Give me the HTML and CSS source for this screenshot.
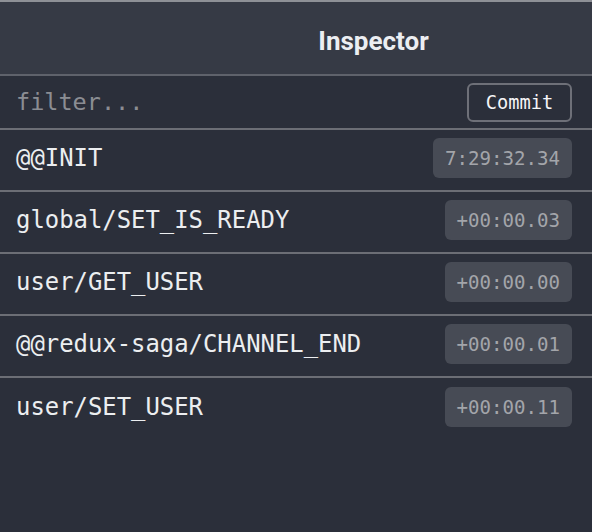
FILE: index.html
```html
<!DOCTYPE html>
<html>
<head>
<meta charset="utf-8">
<link rel="stylesheet" href="styles.css">
</head>
<body>
<div class="panel">
  <header class="header"><h1 class="title">Inspector</h1></header>
  <div class="filter-row">
    <input class="filter" type="text" placeholder="filter...">
    <button class="commit">Commit</button>
  </div>
  <ul class="actions">
    <li class="action"><span class="name">@@INIT</span><span class="time">7:29:32.34</span></li>
    <li class="action"><span class="name">global/SET_IS_READY</span><span class="time">+00:00.03</span></li>
    <li class="action"><span class="name">user/GET_USER</span><span class="time">+00:00.00</span></li>
    <li class="action"><span class="name">@@redux-saga/CHANNEL_END</span><span class="time">+00:00.01</span></li>
    <li class="action"><span class="name">user/SET_USER</span><span class="time">+00:00.11</span></li>
  </ul>
</div>
</body>
</html>
```
FILE: styles.css
```css
* { box-sizing: border-box; }
html, body { margin: 0; padding: 0; }
body {
  background: #2b2f3a;
  width: 592px;
  height: 532px;
  overflow: hidden;
  font-family: "DejaVu Sans Mono", monospace;
  color: #e9eaec;
}
.panel { display: flex; flex-direction: column; }
.header {
  height: 76px;
  border-top: 2px solid #8e9096;
  border-bottom: 2px solid #5f626b;
  background: #363a45;
  display: flex;
  align-items: center;
  justify-content: center;
  padding: 5px 0 0 155px;
}
.title {
  margin: 0;
  font-family: Roboto, "Liberation Sans", sans-serif;
  font-weight: 700;
  font-size: 26px;
  color: #eceef2;
}
.filter-row {
  height: 54px;
  border-bottom: 2px solid #6c6e75;
  display: flex;
  align-items: center;
  justify-content: space-between;
  padding: 0 20px 0 16px;
}
.filter {
  background: transparent;
  border: none;
  outline: none;
  font-family: "DejaVu Sans Mono", monospace;
  font-size: 23.5px;
  color: #e9eaec;
  padding: 0;
  width: 300px;
}
.filter::placeholder { color: #8b8d93; }
.commit {
  height: 39px;
  width: 105px;
  border: 2px solid #6e7078;
  border-radius: 6px;
  background: #2b2f3a;
  color: #f5f5f7;
  font-family: "DejaVu Sans Mono", monospace;
  font-size: 18.7px;
  font-weight: 500;
  padding: 0;
}
.actions { list-style: none; margin: 0; padding: 0; }
.action {
  height: 62px;
  border-bottom: 2px solid #6c6e75;
  display: flex;
  align-items: center;
  justify-content: space-between;
  padding: 8px 20px 12px 16px;
}
.name { font-size: 23.9px; color: #eceef0; }
.time {
  height: 40px;
  display: flex;
  align-items: center;
  padding: 0 12px;
  border-radius: 6px;
  background: #474b55;
  color: #a3a5aa;
  font-size: 19.1px;
}
.action:last-child { border-bottom: none; }
```
